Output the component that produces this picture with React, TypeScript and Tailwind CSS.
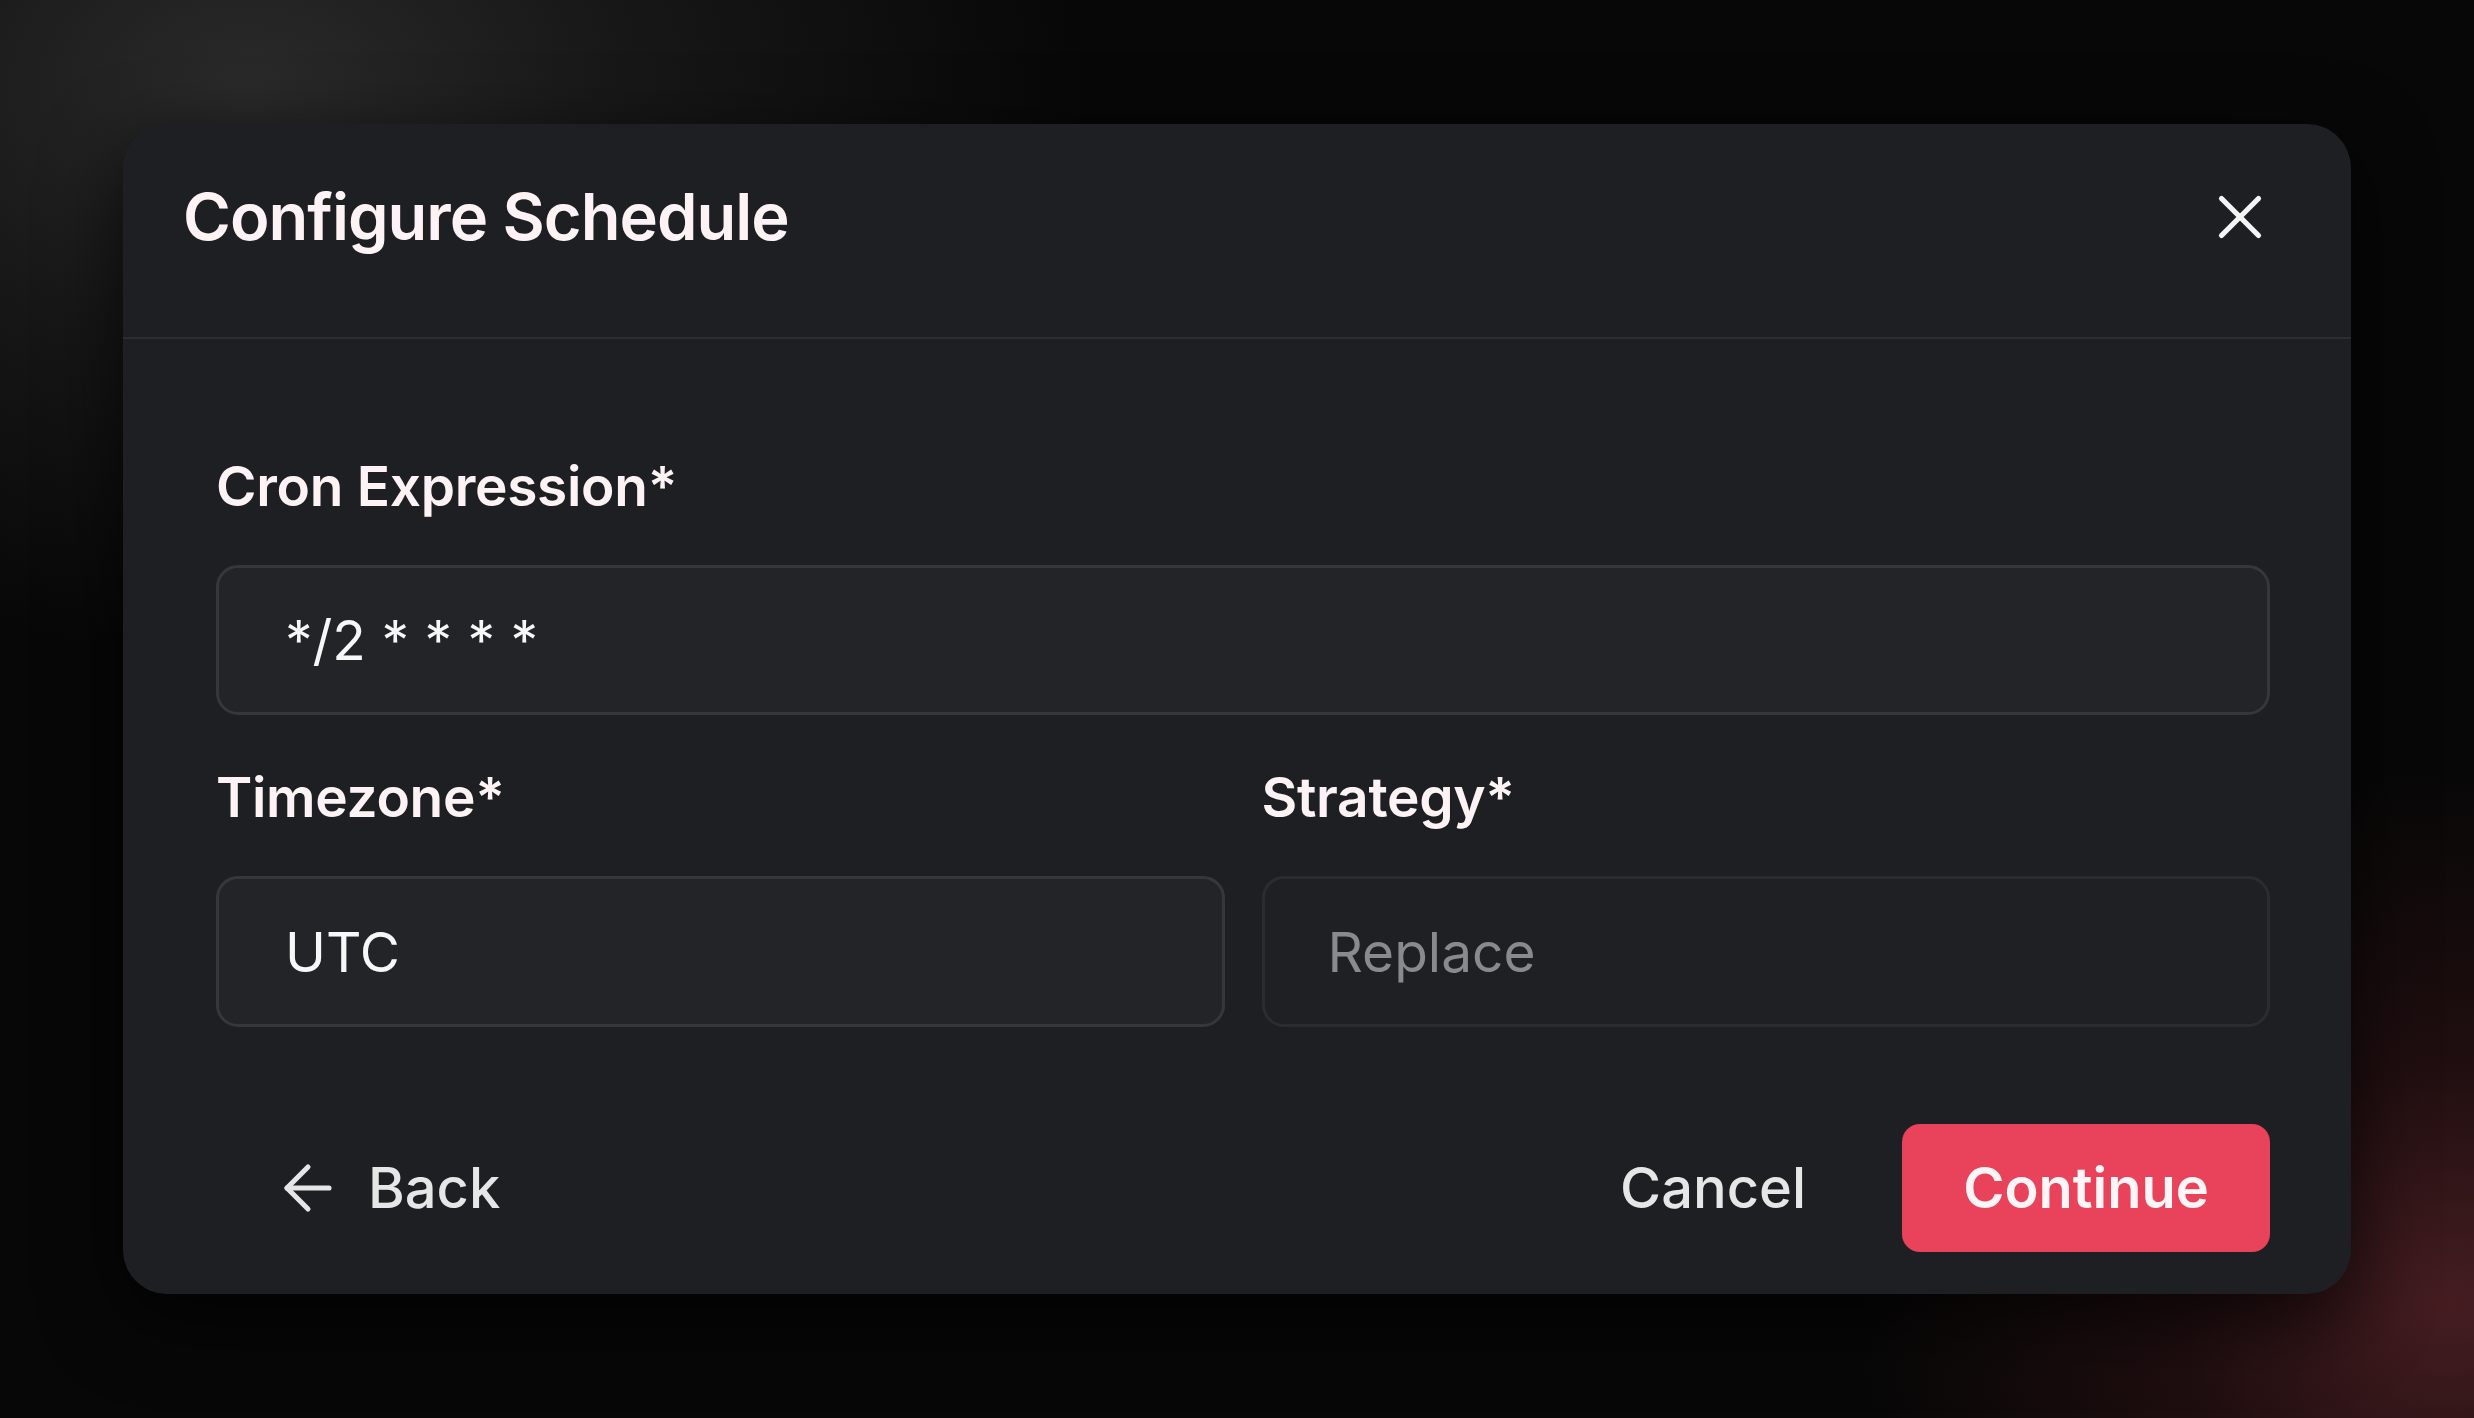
import React from "react";

function XIcon() {
  return (
    <svg width="74" height="74" viewBox="0 0 24 24" fill="none" stroke="currentColor" strokeWidth="1.7" strokeLinecap="round" strokeLinejoin="round">
      <path d="M18 6 6 18" />
      <path d="m6 6 12 12" />
    </svg>
  );
}

function ArrowLeftIcon() {
  return (
    <svg width="72" height="72" viewBox="0 0 24 24" fill="none" stroke="currentColor" strokeWidth="1.7" strokeLinecap="round" strokeLinejoin="round">
      <path d="m12 19-7-7 7-7" />
      <path d="M19 12H5" />
    </svg>
  );
}

export default function App() {
  return (
    <div
      className="min-h-screen w-full flex items-center justify-center bg-[#070707] bg-[radial-gradient(ellipse_34%_40%_at_10%_6%,#2a2a2a_0%,rgba(34,34,34,0.6)_45%,transparent_100%),radial-gradient(ellipse_24%_38%_at_99%_92%,#451d21_0%,rgba(52,20,23,0.55)_45%,transparent_100%)]"
      style={{ fontFamily: "Inter, 'Noto Sans', sans-serif" }}
    >
      <div className="w-[2228px] rounded-[44px] bg-[#1e1f22] shadow-[0_24px_80px_rgba(0,0,0,0.7)] flex flex-col">
        {/* Header */}
        <div className="flex items-center justify-between pl-[60px] pr-[92px] pt-[53px] pb-[80px] border-b-2 border-[#2c2d31]">
          <h1 className="text-[65px] leading-[80px] font-semibold text-[#fdf3f4] tracking-[-1px]">
            Configure Schedule
          </h1>
          <button className="text-[#f4f4f5] -mr-[18px] flex items-center justify-center">
            <XIcon />
          </button>
        </div>

        {/* Body */}
        <div className="flex flex-col pl-[93px] pr-[81px] pt-[113px]">
          <label className="text-[55px] leading-[68px] font-semibold text-[#fdf3f4] tracking-[-0.3px]">
            Cron Expression*
          </label>
          <div className="mt-[45px] h-[150px] rounded-[22px] border-[3px] border-[#36373b] bg-[#232427] flex items-center pl-[66px]">
            <span className="text-[55px] leading-[64px] text-[#f7f7f8]">*/2 * * * *</span>
          </div>

          <div className="mt-[48px] grid grid-cols-2 gap-x-[37px]">
            <div className="flex flex-col">
              <label className="text-[55px] leading-[68px] font-semibold text-[#fdf3f4] tracking-[-0.3px]">
                Timezone*
              </label>
              <div className="mt-[45px] h-[151px] rounded-[22px] border-[3px] border-[#36373b] bg-[#232427] flex items-center pl-[66px]">
                <span className="text-[55px] leading-[64px] text-[#f7f7f8]">UTC</span>
              </div>
            </div>
            <div className="flex flex-col">
              <label className="text-[55px] leading-[68px] font-semibold text-[#fdf3f4] tracking-[-0.3px]">
                Strategy*
              </label>
              <div className="mt-[45px] h-[151px] rounded-[22px] border-[3px] border-[#2b2c30] bg-[#1f2023] flex items-center pl-[63px]">
                <span className="text-[55px] leading-[64px] text-[#8a8a8e]">Replace</span>
              </div>
            </div>
          </div>

          {/* Footer */}
          <div className="mt-[97px] mb-[42px] flex items-center justify-between">
            <button className="flex items-center gap-[24px] h-[128px] pl-[56px] pr-[30px] text-[#e6e6e7]">
              <ArrowLeftIcon />
              <span className="text-[56px] leading-[68px] font-medium">Back</span>
            </button>
            <div className="flex items-center gap-[56px]">
              <button className="h-[128px] px-[40px] text-[56px] leading-[68px] font-medium text-[#e6e6e7]">
                Cancel
              </button>
              <button className="h-[128px] w-[368px] rounded-[18px] bg-[#e8435a] text-[56px] leading-[68px] font-semibold text-[#fff5f6] flex items-center justify-center">
                Continue
              </button>
            </div>
          </div>
        </div>
      </div>
    </div>
  );
}
